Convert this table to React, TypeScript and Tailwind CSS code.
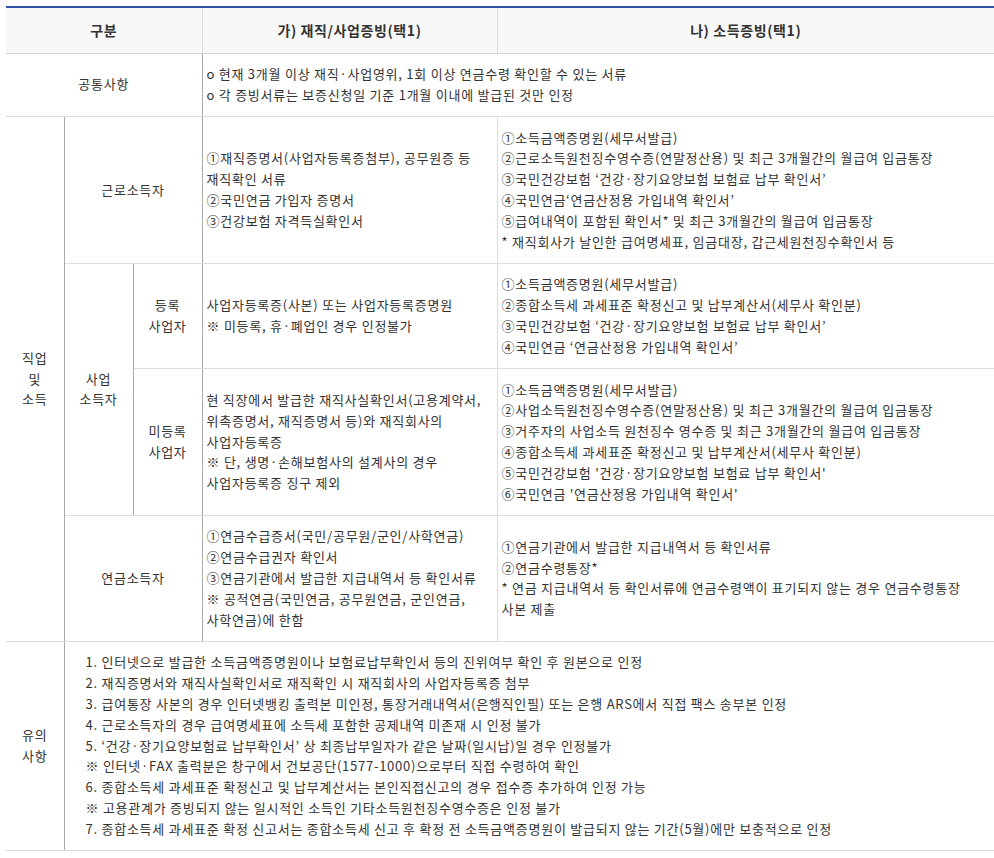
import React from "react";

const lightB = "border-b border-[#dcdcdc]";
const darkR = "border-r border-r-[#a9a9a9]";
const lightR = "border-r border-r-[#dcdcdc]";

function Lines({ items }: { items: string[] }) {
  return (
    <>
      {items.map((t, i) => (
        <div key={i} className="whitespace-nowrap">
          {t}
        </div>
      ))}
    </>
  );
}

const labelCell = `${lightB} ${darkR} text-center align-middle py-[10.5px]`;
const bodyCell = `${lightB} text-left align-middle py-[10.5px] pl-[4px] pr-[4px]`;
const headCell = "h-[46px] bg-[#f8f8f8] border-t-2 border-t-[#2f4fa6] border-b border-b-[#d6d6d6] text-[14px] font-bold tracking-[0.6px]";

export default function App() {
  return (
    <div className="pl-[6px] pt-[6px] bg-white min-h-screen">
      <table className="w-[988px] table-fixed border-collapse font-['Noto_Sans_CJK_KR',sans-serif] text-[13px] leading-[20.8px] tracking-[0.75px] text-[#333333]">
        <colgroup>
          <col className="w-[58px]" />
          <col className="w-[69px]" />
          <col className="w-[69px]" />
          <col className="w-[295px]" />
          <col className="w-[497px]" />
        </colgroup>
        <thead>
          <tr>
            <th colSpan={3} className={`${headCell} ${lightR}`}>
              구분
            </th>
            <th className={`${headCell} ${lightR}`}>가) 재직/사업증빙(택1)</th>
            <th className={headCell}>나) 소득증빙(택1)</th>
          </tr>
        </thead>
        <tbody>
          <tr>
            <td colSpan={3} className={labelCell}>
              공통사항
            </td>
            <td colSpan={2} className={bodyCell}>
              <Lines
                items={[
                  "o 현재 3개월 이상 재직·사업영위, 1회 이상 연금수령 확인할 수 있는 서류",
                  "o 각 증빙서류는 보증신청일 기준 1개월 이내에 발급된 것만 인정",
                ]}
              />
            </td>
          </tr>

          <tr>
            <td rowSpan={4} className={labelCell}>
              직업
              <br />및<br />
              소득
            </td>
            <td colSpan={2} className={labelCell}>
              근로소득자
            </td>
            <td className={`${bodyCell} ${lightR}`}>
              <Lines
                items={[
                  "①재직증명서(사업자등록증첨부), 공무원증 등",
                  "재직확인 서류",
                  "②국민연금 가입자 증명서",
                  "③건강보험 자격득실확인서",
                ]}
              />
            </td>
            <td className={bodyCell}>
              <Lines
                items={[
                  "①소득금액증명원(세무서발급)",
                  "②근로소득원천징수영수증(연말정산용) 및 최근 3개월간의 월급여 입금통장",
                  "③국민건강보험 ‘건강·장기요양보험 보험료 납부 확인서’",
                  "④국민연금‘연금산정용 가입내역 확인서’",
                  "⑤급여내역이 포함된 확인서* 및 최근 3개월간의 월급여 입금통장",
                  "* 재직회사가 날인한 급여명세표, 임금대장, 갑근세원천징수확인서 등",
                ]}
              />
            </td>
          </tr>

          <tr>
            <td rowSpan={2} className={labelCell}>
              사업
              <br />
              소득자
            </td>
            <td className={labelCell}>
              등록
              <br />
              사업자
            </td>
            <td className={`${bodyCell} ${lightR}`}>
              <Lines
                items={[
                  "사업자등록증(사본) 또는 사업자등록증명원",
                  "※ 미등록, 휴·폐업인 경우 인정불가",
                ]}
              />
            </td>
            <td className={bodyCell}>
              <Lines
                items={[
                  "①소득금액증명원(세무서발급)",
                  "②종합소득세 과세표준 확정신고 및 납부계산서(세무사 확인분)",
                  "③국민건강보험 ‘건강·장기요양보험 보험료 납부 확인서’",
                  "④국민연금 ‘연금산정용 가입내역 확인서’",
                ]}
              />
            </td>
          </tr>

          <tr>
            <td className={labelCell}>
              미등록
              <br />
              사업자
            </td>
            <td className={`${bodyCell} ${lightR}`}>
              <Lines
                items={[
                  "현 직장에서 발급한 재직사실확인서(고용계약서,",
                  "위촉증명서, 재직증명서 등)와 재직회사의",
                  "사업자등록증",
                  "※ 단, 생명·손해보험사의 설계사의 경우",
                  "사업자등록증 징구 제외",
                ]}
              />
            </td>
            <td className={bodyCell}>
              <Lines
                items={[
                  "①소득금액증명원(세무서발급)",
                  "②사업소득원천징수영수증(연말정산용) 및 최근 3개월간의 월급여 입금통장",
                  "③거주자의 사업소득 원천징수 영수증 및 최근 3개월간의 월급여 입금통장",
                  "④종합소득세 과세표준 확정신고 및 납부계산서(세무사 확인분)",
                  "⑤국민건강보험 '건강·장기요양보험 보험료 납부 확인서'",
                  "⑥국민연금 '연금산정용 가입내역 확인서'",
                ]}
              />
            </td>
          </tr>

          <tr>
            <td colSpan={2} className={labelCell}>
              연금소득자
            </td>
            <td className={`${bodyCell} ${lightR}`}>
              <Lines
                items={[
                  "①연금수급증서(국민/공무원/군인/사학연금)",
                  "②연금수급권자 확인서",
                  "③연금기관에서 발급한 지급내역서 등 확인서류",
                  "※ 공적연금(국민연금, 공무원연금, 군인연금,",
                  "사학연금)에 한함",
                ]}
              />
            </td>
            <td className={bodyCell}>
              <Lines
                items={[
                  "①연금기관에서 발급한 지급내역서 등 확인서류",
                  "②연금수령통장*",
                  "* 연금 지급내역서 등 확인서류에 연금수령액이 표기되지 않는 경우 연금수령통장",
                  "사본 제출",
                ]}
              />
            </td>
          </tr>

          <tr>
            <td className={labelCell}>
              유의
              <br />
              사항
            </td>
            <td colSpan={4} className={`${lightB} text-left align-middle py-[10.5px] pl-[21px]`}>
              <Lines
                items={[
                  "1. 인터넷으로 발급한 소득금액증명원이나 보험료납부확인서 등의 진위여부 확인 후 원본으로 인정",
                  "2. 재직증명서와 재직사실확인서로 재직확인 시 재직회사의 사업자등록증 첨부",
                  "3. 급여통장 사본의 경우 인터넷뱅킹 출력본 미인정, 통장거래내역서(은행직인필) 또는 은행 ARS에서 직접 팩스 송부본 인정",
                  "4. 근로소득자의 경우 급여명세표에 소득세 포함한 공제내역 미존재 시 인정 불가",
                  "5. ‘건강·장기요양보험료 납부확인서’ 상 최종납부일자가 같은 날짜(일시납)일 경우 인정불가",
                  "※ 인터넷·FAX 출력분은 창구에서 건보공단(1577-1000)으로부터 직접 수령하여 확인",
                  "6. 종합소득세 과세표준 확정신고 및 납부계산서는 본인직접신고의 경우 접수증 추가하여 인정 가능",
                  "※ 고용관계가 증빙되지 않는 일시적인 소득인 기타소득원천징수영수증은 인정 불가",
                  "7. 종합소득세 과세표준 확정 신고서는 종합소득세 신고 후 확정 전 소득금액증명원이 발급되지 않는 기간(5월)에만 보충적으로 인정",
                ]}
              />
            </td>
          </tr>
        </tbody>
      </table>
    </div>
  );
}
